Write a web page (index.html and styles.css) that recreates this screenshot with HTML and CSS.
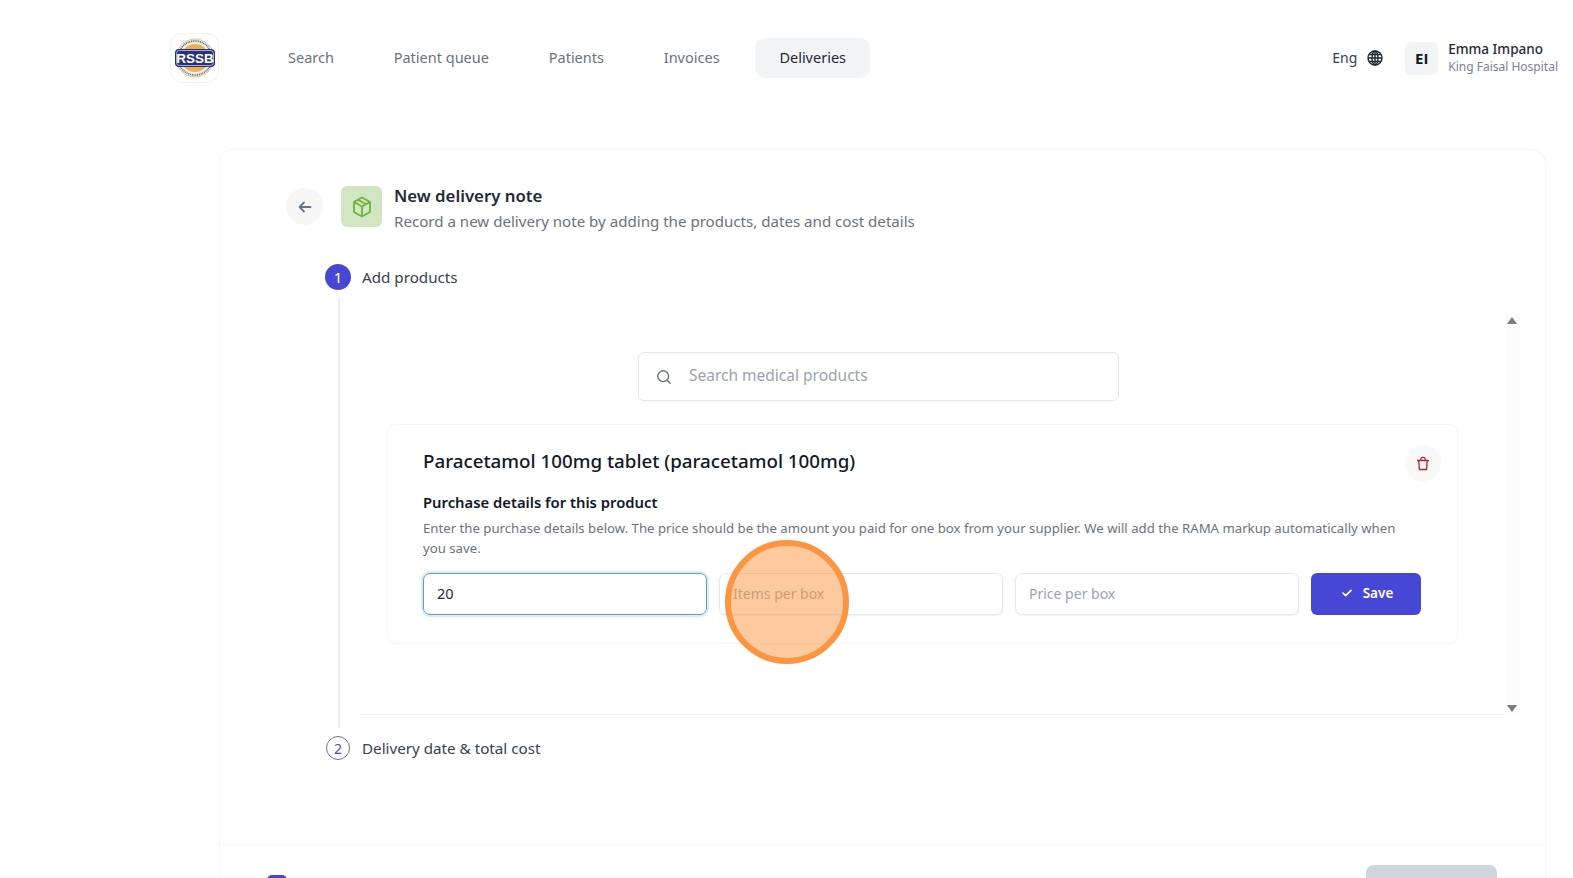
FILE: index.html
```html
<!DOCTYPE html>
<html lang="en">

<head>
    <meta charset="utf-8" />
    <title>New delivery note</title>
    <link rel="stylesheet" href="styles.css">
</head>

<body>
    <header class="topbar">
        <div class="logo">
            <svg width="42" height="42" viewBox="0 0 42 42">
                <circle cx="21" cy="21" r="19" fill="#f4f1e6" stroke="#c9b98c" stroke-width=".8"/>
                <circle cx="21" cy="21" r="17" fill="none" stroke="#5a5a70" stroke-width="1.6" stroke-dasharray="1 .8"/>
                <circle cx="21" cy="21" r="14" fill="#efb04c"/>
                <rect x="1" y="12" width="40" height="18" rx="4" fill="#27327f"/>
                <rect x="2.5" y="13.5" width="37" height="15" rx="3" fill="none" stroke="#fff" stroke-width=".6"/>
                <text x="21" y="26.3" class="logo-text" text-anchor="middle">RSSB</text>
            </svg>
        </div>
        <nav class="nav">
            <a class="nav-item">Search</a>
            <a class="nav-item">Patient queue</a>
            <a class="nav-item">Patients</a>
            <a class="nav-item">Invoices</a>
            <a class="nav-item active">Deliveries</a>
        </nav>
        <div class="lang">
            <span class="lang-name">Eng</span>
            <svg width="16" height="16" viewBox="0 0 16 16" fill="none" stroke="#1f2937" stroke-width="1.4">
                <circle cx="8" cy="8" r="7"/>
                <ellipse cx="8" cy="8" rx="3" ry="7"/>
                <path d="M1 8h14M2 4.5h12M2 11.5h12M8 1v14"/>
            </svg>
        </div>
        <div class="user">
            <div class="avatar">EI</div>
            <div class="user-text">
                <div class="user-name">Emma Impano</div>
                <div class="user-org">King Faisal Hospital</div>
            </div>
        </div>
    </header>

    <main class="card">
        <div class="card-head">
            <button class="back">
                <svg width="14" height="14" viewBox="0 0 14 14" fill="none" stroke="#64748b" stroke-width="1.8" stroke-linecap="round" stroke-linejoin="round">
                    <path d="M12.5 7h-11M6 2.5 1.5 7 6 11.5"/>
                </svg>
            </button>
            <div class="head-icon">
                <svg width="20" height="22" viewBox="0 0 20 22" fill="none" stroke="#6db33f" stroke-width="1.8" stroke-linejoin="round">
                    <path d="M10 1.5 18 6v10l-8 4.5L2 16V6z"/>
                    <path d="M2 6l8 4.5L18 6M10 10.5v10M6 3.8l8 4.5"/>
                </svg>
            </div>
            <div class="head-text">
                <h1 class="page-title">New delivery note</h1>
                <p class="page-sub">Record a new delivery note by adding the products, dates and cost details</p>
            </div>
        </div>

        <div class="stepper">
            <div class="step">
                <span class="step-num current">1</span>
                <span class="step-label">Add products</span>
            </div>
            <div class="step-body">
                <div class="scroll-area">
                    <div class="scroll-content">
                        <div class="search">
                            <svg width="16" height="16" viewBox="0 0 16 16" fill="none" stroke="#6b7280" stroke-width="1.4" stroke-linecap="round">
                                <circle cx="7.2" cy="7.2" r="5.4"/>
                                <path d="M11.2 11.2l3 3"/>
                            </svg>
                            <span class="search-text">Search medical products</span>
                        </div>
                        <section class="product">
                            <div class="product-top">
                                <h2 class="product-name">Paracetamol 100mg tablet (paracetamol 100mg)</h2>
                                <button class="trash">
                                    <svg width="14" height="15" viewBox="0 0 14 15" fill="none" stroke="#ab2430" stroke-width="1.3" stroke-linejoin="round" stroke-linecap="round">
                                        <path d="M1.5 4.5h11M2.8 4.5l.6 9h7.2l.6-9M4.8 4.5V3a1.8 1.8 0 0 1 1.8-1.6h.8A1.8 1.8 0 0 1 9.2 3v1.5"/>
                                    </svg>
                                </button>
                            </div>
                            <h3 class="details-title">Purchase details for this product</h3>
                            <p class="details-text">Enter the purchase details below. The price should be the amount you paid for one box from your supplier. We will add the RAMA markup automatically when you save.</p>
                            <div class="fields">
                                <div class="field focused">20</div>
                                <div class="field">Items per box</div>
                                <div class="field">Price per box</div>
                                <button class="save">
                                    <svg width="10" height="8" viewBox="0 0 11 9" fill="none" stroke="#fff" stroke-width="1.8" stroke-linecap="round" stroke-linejoin="round">
                                        <path d="M1 4.5 4 7.5 10 1.5"/>
                                    </svg>
                                    Save
                                </button>
                            </div>
                        </section>
                    </div>
                    <div class="scrollbar">
                        <span class="arrow up"></span>
                        <span class="arrow down"></span>
                    </div>
                </div>
            </div>
            <div class="step">
                <span class="step-num">2</span>
                <span class="step-label">Delivery date &amp; total cost</span>
            </div>
        </div>

        <footer class="card-foot">
            <span class="check"></span>
            <span class="finish"></span>
        </footer>
    </main>

    <div class="click-mark"></div>
</body>

</html>
```

FILE: styles.css
```css
* {
    box-sizing: border-box;
}

html,
body {
    height: 100%;
}

body {
    margin: 0;
    overflow: hidden;
    position: relative;
    background: #fff;
    color: #1f2937;
    font-family: "Noto Sans", "Liberation Sans", sans-serif;
}

.topbar {
    display: flex;
    align-items: center;
    height: 116px;
    padding-left: 170px;
    padding-right: 15px;
}

.logo {
    width: 49px;
    height: 50px;
    border: 1px solid #f1f1f1;
    border-radius: 12px;
    display: flex;
    align-items: center;
    justify-content: center;
}

.logo-text {
    font-family: "Liberation Sans", sans-serif;
    font-size: 13.5px;
    font-weight: 700;
    fill: #fff;
}

.nav {
    display: flex;
    align-items: center;
    margin-left: 45px;
    gap: 11.8px;
}

.nav-item {
    padding: 9px 24px 11px;
    border-radius: 10px;
    font-size: 14.5px;
    line-height: 20px;
    color: #6b7280;
}

.nav-item.active {
    background: #f3f4f6;
    color: #1f2937;
}

.lang {
    margin-left: auto;
    display: flex;
    align-items: center;
    gap: 10px;
    font-size: 14px;
    color: #374151;
}

.lang-name {
    margin-top: -2px;
}

.user {
    display: flex;
    align-items: center;
    gap: 10px;
    margin-left: 22px;
}

.avatar {
    width: 33px;
    height: 33px;
    border-radius: 6px;
    background: #f3f4f6;
    display: flex;
    align-items: center;
    justify-content: center;
    font-family: "Open Sans", sans-serif;
    font-size: 15px;
    font-weight: 700;
    color: #111827;
}

.user-text {
    margin-top: -2px;
}

.user-name {
    font-size: 13.5px;
    line-height: 18px;
    font-weight: 500;
}

.user-org {
    font-size: 12px;
    line-height: 17px;
    color: #7b8290;
}

.card {
    margin: 33px 27px 0 219px;
    border: 1px solid #f6f6f6;
    border-radius: 14px;
    height: 760px;
    display: flex;
    flex-direction: column;
}

.card-head {
    display: flex;
    align-items: flex-start;
    padding: 36px 0 0 66px;
}

.back {
    width: 37px;
    height: 37px;
    margin-top: 2px;
    border: 0;
    border-radius: 50%;
    background: #f7f7f8;
    display: flex;
    align-items: center;
    justify-content: center;
    padding: 0;
}

.head-icon {
    width: 41px;
    height: 41px;
    margin-left: 18px;
    margin-right: 12px;
    border-radius: 6px;
    background: #d2e6c4;
    display: flex;
    align-items: center;
    justify-content: center;
}

.head-text {
    margin-top: -1px;
}

.page-title {
    margin: 0;
    font-size: 16.8px;
    line-height: 22px;
    font-weight: 600;
}

.page-sub {
    margin: 3px 0 0;
    font-size: 15.1px;
    line-height: 22px;
    color: #6b7280;
}

.stepper {
    margin: 32px 25px 0 105px;
    flex: 1;
}

.step {
    display: flex;
    align-items: center;
    gap: 11px;
    font-size: 15.2px;
    color: #374151;
}

.step-num {
    width: 24px;
    height: 24px;
    margin: 0 1px;
    border-radius: 50%;
    border: 1px solid #6f6bb5;
    color: #4f4b9c;
    display: flex;
    align-items: center;
    justify-content: center;
    font-size: 14px;
}

.step-num.current {
    width: 26px;
    height: 26px;
    margin: 0;
    border: 0;
    background: #4747d6;
    color: #fff;
    font-size: 15px;
}

.step-body {
    height: 431px;
    margin: 7px 0 8px 13px;
    border-left: 2px solid #efefef;
    padding-left: 19px;
}

.scroll-area {
    display: flex;
    height: 418px;
}

.scroll-content {
    flex: 1;
    padding: 55px 0 0 28px;
    border-bottom: 1px solid #f3f3f3;
}

.search {
    display: flex;
    align-items: center;
    gap: 17px;
    width: 481px;
    height: 49px;
    margin-left: 251px;
    padding-left: 17px;
    border: 1px solid #e5e7eb;
    border-radius: 6px;
    font-size: 15.5px;
    color: #9ca3af;
}

.search-text {
    margin-top: -4px;
}

.product {
    width: 1071px;
    height: 220px;
    margin-top: 23px;
    padding: 20px 36px 0 35px;
    border: 1px solid #f5f5f5;
    border-radius: 8px;
}

.product-top {
    display: flex;
    justify-content: space-between;
    align-items: center;
    height: 36px;
    margin-right: -20px;
}

.product-name {
    margin: 0 0 4px;
    font-size: 18.75px;
    line-height: 26px;
    font-weight: 500;
    color: #111827;
}

.trash {
    width: 36px;
    height: 36px;
    border: 0;
    border-radius: 50%;
    padding: 0;
    background: #f8f8f9;
    display: flex;
    align-items: center;
    justify-content: center;
}

.details-title {
    margin: 10px 0 0;
    font-size: 14.8px;
    line-height: 22px;
    font-weight: 600;
    color: #111827;
}

.details-text {
    margin: 5px 0 0;
    max-width: 985px;
    font-size: 13.2px;
    line-height: 20px;
    color: #6b7280;
}

.fields {
    display: grid;
    grid-template-columns: 284px 284px 284px 110px;
    gap: 12px;
    margin-top: 15px;
}

.field {
    height: 42px;
    padding: 0 0 2px 13px;
    border: 1px solid #e5e7eb;
    border-radius: 7px;
    box-shadow: 0 1px 2px rgba(0, 0, 0, .06);
    display: flex;
    align-items: center;
    font-size: 14px;
    color: #9ca3af;
}

.field.focused {
    border-color: #5b9bd0;
    box-shadow: 0 0 0 2px #dcecfb;
    font-size: 14.5px;
    color: #1f2937;
}

.save {
    height: 42px;
    padding: 0 0 2px 3px;
    border: 0;
    border-radius: 6px;
    background: #4747d6;
    color: #fff;
    font-family: inherit;
    font-size: 13.5px;
    font-weight: 600;
    display: flex;
    align-items: center;
    justify-content: center;
    gap: 11px;
}

.scrollbar {
    position: relative;
    width: 15px;
    background: #fcfcfc;
    margin-top: 16px;
}

.arrow {
    position: absolute;
    left: 2px;
    width: 0;
    height: 0;
    border-left: 5.5px solid transparent;
    border-right: 5.5px solid transparent;
}

.arrow.up {
    top: 4px;
    border-bottom: 7px solid #7d7d7d;
}

.arrow.down {
    bottom: 3px;
    border-top: 7px solid #7d7d7d;
}

.card-foot {
    height: 100px;
    margin-top: 84px;
    border-top: 1px solid #f5f5f5;
    position: relative;
}

.check {
    position: absolute;
    left: 47px;
    top: 30px;
    width: 20px;
    height: 20px;
    border-radius: 5px;
    background: #4747d6;
}

.finish {
    position: absolute;
    right: 48px;
    top: 20px;
    width: 131px;
    height: 44px;
    border-radius: 8px;
    background: #cfd5de;
}

.click-mark {
    position: absolute;
    left: 725px;
    top: 540px;
    width: 124px;
    height: 124px;
    border-radius: 50%;
    border: 6px solid #fb953f;
    background: rgba(251, 149, 63, .5);
}
```
